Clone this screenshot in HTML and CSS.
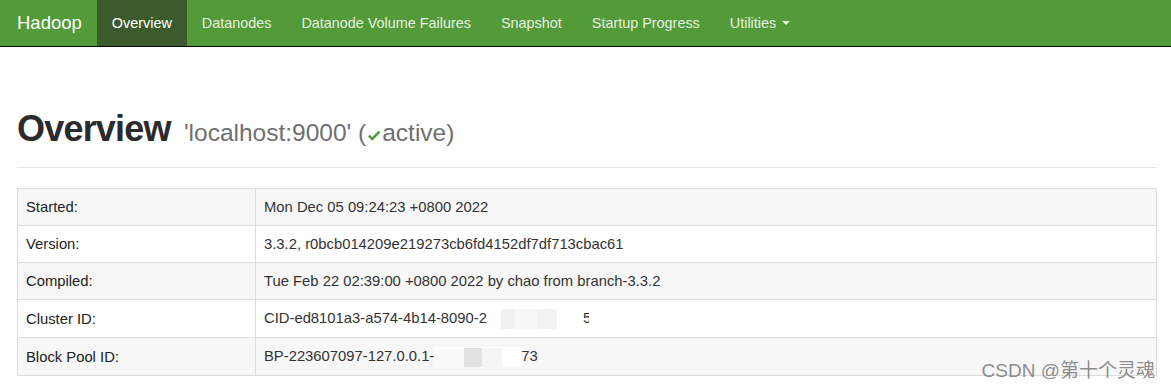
FILE: index.html
```html
<!DOCTYPE html>
<html lang="en">
<head>
<meta charset="utf-8">
<title>Namenode information</title>
<link rel="stylesheet" href="styles.css">
</head>
<body>
<header class="navbar">
  <span class="brand">Hadoop</span>
  <nav class="nav">
    <a class="nav-item active">Overview</a>
    <a class="nav-item">Datanodes</a>
    <a class="nav-item">Datanode Volume Failures</a>
    <a class="nav-item">Snapshot</a>
    <a class="nav-item">Startup Progress</a>
    <a class="nav-item">Utilities <span class="caret"></span></a>
  </nav>
</header>
<main class="container">
  <div class="page-header">
    <h1>Overview <small>'localhost:9000' (<svg class="ok" viewBox="0 0 14 12" width="14" height="12"><path d="M1 6.5 L2.8 4.8 L5.2 7.2 L11.6 0.8 L13.4 2.6 L5.2 10.8 Z" fill="#4f9a38"/></svg>active)</small></h1>
  </div>
  <table class="info">
    <tr><th>Started:</th><td>Mon Dec 05 09:24:23 +0800 2022</td></tr>
    <tr><th>Version:</th><td>3.3.2, r0bcb014209e219273cb6fd4152df7df713cbac61</td></tr>
    <tr><th>Compiled:</th><td>Tue Feb 22 02:39:00 +0800 2022 by chao from branch-3.3.2</td></tr>
    <tr><th>Cluster ID:</th><td>CID-ed8101a3-a574-4b14-8090-2<span class="blur b1"></span><span class="tail">5</span></td></tr>
    <tr><th>Block Pool ID:</th><td>BP-223607097-127.0.0.1-<span class="blur b2"></span>73</td></tr>
  </table>
</main>
<div class="watermark">CSDN @第十个灵魂</div>
</body>
</html>
```
FILE: styles.css
```css
* { box-sizing: border-box; }
html, body { margin: 0; padding: 0; }
body {
  position: relative;
  font-family: "Liberation Sans", Arial, "Noto Sans CJK SC", sans-serif;
  font-size: 14px;
  line-height: 20px;
  color: #333;
  background: #fff;
  width: 1171px;
  height: 390px;
  overflow: hidden;
}
.navbar {
  display: flex;
  align-items: stretch;
  height: 47px;
  background: #529b38;
  border-bottom: 1px solid #0a0a0a;
}
.brand {
  display: flex;
  align-items: center;
  padding: 0 15px 0 17px;
  font-size: 18.5px;
  color: #fff;
}
.nav { display: flex; }
.nav-item {
  display: flex;
  align-items: center;
  padding: 0 15px;
  color: #e6f0e1;
  font-size: 14.4px;
  cursor: pointer;
}
.nav-item.active {
  background: #3c5b2d;
  color: #fff;
}
.caret {
  display: inline-block;
  width: 0; height: 0;
  margin-left: 6px;
  border-top: 4px solid #e6f0e1;
  border-left: 4px solid transparent;
  border-right: 4px solid transparent;
  vertical-align: middle;
}
.container {
  padding: 61px 14px 0 17px;
}
.page-header {
  padding-bottom: 18px;
  border-bottom: 1px solid #e6e6e6;
}
h1 {
  margin: 0;
  height: 41px;
  font-size: 36px;
  line-height: 41px;
  font-weight: bold;
  color: #2b2b2b;
  letter-spacing: -0.8px;
}
h1 small {
  margin-left: 4px;
  font-size: 24.5px;
  line-height: 1;
  font-weight: normal;
  color: #707070;
  letter-spacing: 0;
}
.ok { vertical-align: -1px; margin: 0 1px 0 1px; }
.info {
  margin-top: 20px;
  width: 100%;
  border-collapse: separate;
  border-spacing: 0;
  border-right: 1px solid #dcdcdc;
  border-bottom: 1px solid #dcdcdc;
}
.info th, .info td {
  border-top: 1px solid #dcdcdc;
  border-left: 1px solid #dcdcdc;
  padding: 8px;
  height: 37px;
  text-align: left;
  font-size: 14.8px;
  line-height: 20px;
}
.info th { width: 238px; font-weight: normal; color: #222; }
.info tr:nth-child(odd) { background: #f7f7f7; }
.blur {
  display: inline-block;
  height: 20px;
  vertical-align: middle;
}
.b1 {
  width: 96px;
  background: linear-gradient(90deg, #fff 0 14px, #f0f0f0 14px 28px, #f8f8f8 28px 50px, #f2f2f2 50px 70px, #fff 70px);
}
.b2 {
  width: 87px;
  background: linear-gradient(180deg, #fff 0 1px, transparent 1px), linear-gradient(90deg, #fafafa 0 30px, #e2e2e2 30px 48px, #f5f5f5 48px 68px, #fff 68px);
}
.tail { display: inline-block; width: 6px; overflow: hidden; vertical-align: top; }
.watermark {
  position: absolute;
  right: 16px;
  bottom: 8px;
  font-size: 19px;
  line-height: 22px;
  color: rgba(120, 120, 120, 0.85);
  font-family: "Liberation Sans", "Noto Sans CJK SC", sans-serif;
}
```
